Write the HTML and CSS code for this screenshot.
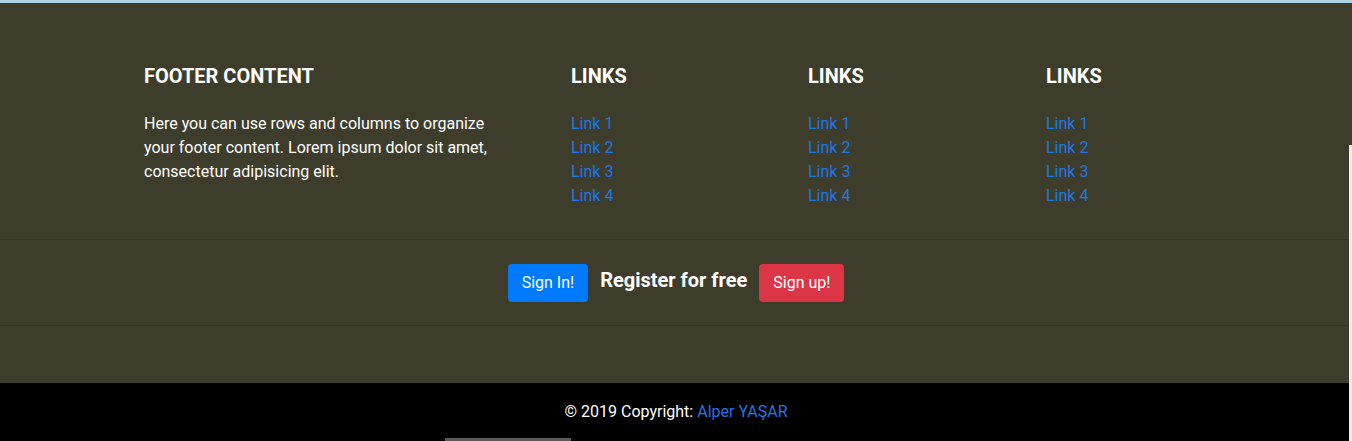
FILE: index.html
```html
<!DOCTYPE html>
<html lang="en">
<head>
<meta charset="utf-8">
<title>Footer</title>
<link rel="stylesheet" href="styles.css">
</head>
<body>
<div class="topbar"></div>
<footer class="footer">
  <div class="main">
    <div class="col col-about">
      <h5 class="heading">FOOTER CONTENT</h5>
      <p class="about">Here you can use rows and columns to organize your footer content. Lorem ipsum dolor sit amet, consectetur adipisicing elit.</p>
    </div>
    <div class="col">
      <h5 class="heading">LINKS</h5>
      <ul class="links">
        <li><a href="#!">Link 1</a></li>
        <li><a href="#!">Link 2</a></li>
        <li><a href="#!">Link 3</a></li>
        <li><a href="#!">Link 4</a></li>
      </ul>
    </div>
    <div class="col">
      <h5 class="heading">LINKS</h5>
      <ul class="links">
        <li><a href="#!">Link 1</a></li>
        <li><a href="#!">Link 2</a></li>
        <li><a href="#!">Link 3</a></li>
        <li><a href="#!">Link 4</a></li>
      </ul>
    </div>
    <div class="col">
      <h5 class="heading">LINKS</h5>
      <ul class="links">
        <li><a href="#!">Link 1</a></li>
        <li><a href="#!">Link 2</a></li>
        <li><a href="#!">Link 3</a></li>
        <li><a href="#!">Link 4</a></li>
      </ul>
    </div>
  </div>
  <hr class="rule">
  <div class="cta">
    <a class="btn btn-blue" href="#!">Sign In!</a>
    <h5 class="cta-text">Register for free</h5>
    <a class="btn btn-red" href="#!">Sign up!</a>
  </div>
  <hr class="rule">
  <div class="spacer"></div>
  <div class="copyright">© 2019 Copyright: <a href="#!">Alper YAŞAR</a></div>
</footer>
<div class="vscroll"></div>
<div class="hscroll"></div>
</body>
</html>
```
FILE: styles.css
```css
* { box-sizing: border-box; }
html, body { margin: 0; padding: 0; }
body {
  font-family: Roboto, "Open Sans", sans-serif;
  font-size: 16px;
  line-height: 24px;
  color: #fff;
  background: #3e3d2b;
  overflow: hidden;
  height: 441px;
}
.topbar { height: 3px; background: #a9d2e2; }
.footer { background: #3e3d2b; }
.main {
  display: grid;
  grid-template-columns: 427px 237px 238px 238px;
  padding: 61px 0 31px 144px;
}
.heading {
  margin: 0 0 24px;
  font-size: 20px;
  line-height: 24px;
  font-weight: 700;
  color: #fff;
}
.about { margin: 0; width: 352px; }
.links { list-style: none; margin: 0; padding: 0; }
.links a, .copyright a { color: #1f76e6; text-decoration: none; }
.rule {
  margin: 0;
  border: 0;
  border-top: 1px solid rgba(0,0,0,.12);
  height: 0;
}
.cta {
  display: flex;
  justify-content: center;
  align-items: center;
  gap: 12px;
  padding: 24px 0 23px;
}
.btn {
  display: inline-block;
  padding: 7px 14px;
  font-size: 16px;
  line-height: 24px;
  color: #fff;
  border-radius: 4px;
  text-decoration: none;
}
.btn-blue { background: #007bff; }
.btn-red { background: #dc3545; }
.cta-text {
  margin: 0 0 6px;
  font-size: 20px;
  line-height: 24px;
  font-weight: 700;
}
.spacer { height: 57px; }
.copyright {
  background: #000;
  text-align: center;
  padding: 17px 0 17px;
  font-size: 16px;
  line-height: 24px;
}
.vscroll {
  position: absolute;
  right: 0;
  top: 145px;
  width: 3px;
  height: 296px;
  background: #eeeeee;
}
.hscroll {
  position: absolute;
  left: 445px;
  bottom: 0;
  width: 126px;
  height: 3px;
  background: #5a5a5a;
}
```
